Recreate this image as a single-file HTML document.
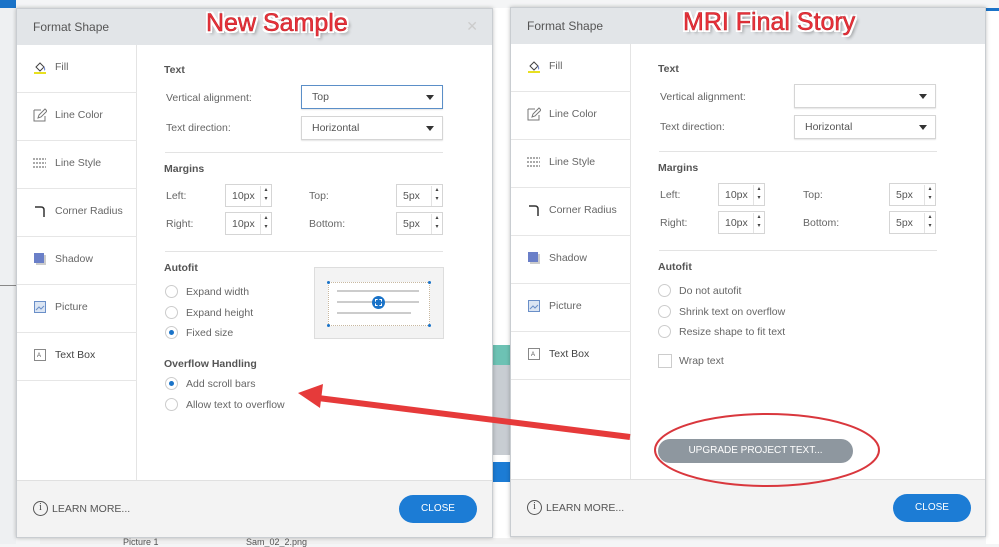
<!DOCTYPE html><html><head><meta charset="utf-8"><style>
*{box-sizing:border-box;margin:0;padding:0}
body{width:999px;height:544px;overflow:hidden;background:#f4f5f6;font-family:"Liberation Sans",sans-serif;font-size:10.5px;color:#555;position:relative}
.a{position:absolute}
.dlg{position:absolute;background:#fff;border:1px solid #c9cdd1;box-shadow:0 0 4px rgba(0,0,0,.25)}
.hdr{position:absolute;left:0;top:0;right:0;background:#e2e5e8;font-size:12px;color:#555}
.side{position:absolute;left:0;width:120px;border-right:1px solid #e4e4e4}
.it{position:absolute;left:0;width:120px;height:48px;border-bottom:1px solid #e6e6e6;font-size:10.5px;color:#666}
.it span{position:absolute;left:38px;top:16px}
.it svg{position:absolute;left:16px;top:15px}
.h{position:absolute;font-weight:bold;color:#555;font-size:10.5px}
.l{position:absolute;color:#666;font-size:10.5px}
.dd{position:absolute;border:1px solid #d5d5d5;background:#fff;font-size:10.5px;color:#555;padding:5px 10px;box-shadow:0 1px 1px rgba(0,0,0,.1)}
.dd:after{content:"";position:absolute;right:8px;top:9px;border:4px solid transparent;border-top:5px solid #333}
.sp{position:absolute;border:1px solid #d5d5d5;background:#fff;width:47px;height:23px;font-size:10.5px;color:#555;padding:5px 6px}
.sp:after{content:"▴\A▾";white-space:pre;font-size:6px;line-height:9px;color:#444;text-align:center;position:absolute;right:0;top:1px;width:10px;height:20px;border-left:1px solid #e3e3e3}
.hr{position:absolute;height:1px;background:#e3e3e3}
.r{position:absolute;width:13px;height:13px;border:1px solid #ccc;border-radius:50%;background:#fff}
.r.on:after{content:"";position:absolute;left:3px;top:3px;width:5px;height:5px;border-radius:50%;background:#1a73c8}
.ft{position:absolute;left:0;right:0;bottom:0;background:#f3f3f3;border-top:1px solid #e0e0e0}
.btn{position:absolute;background:#1c7cd5;color:#fff;border-radius:14px;font-size:10px;text-align:center;line-height:27px}
.info{position:absolute;width:15px;height:15px;border:1.5px solid #555;border-radius:50%;font-size:10px;text-align:center;line-height:12px;font-family:"Liberation Serif",serif;color:#444}
.ttl{position:absolute;font-size:25px;color:#e8323a;-webkit-text-stroke:0.5px #c02028;text-shadow:-2px -2px 0 #fff,2px -2px 0 #fff,-2px 2px 0 #fff,2px 2px 0 #fff,0 2px 0 #fff,2px 0 0 #fff,3px 3px 3px rgba(0,0,0,.4)}
</style></head><body>
<!-- background -->
<div class="a" style="left:0;top:0;width:16px;height:8px;background:#1a73c8"></div>
<div class="a" style="left:0;top:8px;width:16px;height:536px;background:#eef0f2"></div>
<div class="a" style="left:0;top:285px;width:16px;height:1px;background:#888"></div>
<div class="a" style="left:493px;top:8px;width:17px;height:536px;background:#fff"></div>
<div class="a" style="left:493px;top:345px;width:17px;height:20px;background:#6dc2b4"></div>
<div class="a" style="left:493px;top:365px;width:17px;height:90px;background:#c8cdd2"></div>
<div class="a" style="left:493px;top:462px;width:17px;height:20px;background:#1c7cd5"></div>
<div class="a" style="left:986px;top:8px;width:13px;height:536px;background:#fff"></div>
<div class="a" style="left:986px;top:8px;width:13px;height:3px;background:#1a73c8"></div>
<div class="a" style="left:40px;top:538px;width:540px;height:6px;background:#f0f0f0;font-size:9px;color:#555"><span style="position:absolute;left:83px;top:-1px">Picture 1</span><span style="position:absolute;left:206px;top:-1px">Sam_02_2.png</span></div>

<!-- LEFT DIALOG -->
<div class="dlg" style="left:16px;top:8px;width:477px;height:530px">
 <div class="hdr" style="height:36px"><span style="position:absolute;left:16px;top:11px">Format Shape</span><span style="position:absolute;right:14px;top:9px;color:#ccc;font-size:14px">✕</span></div>
 <div class="side" style="top:36px;height:437px">
  <div class="it" style="top:0"><svg width="14" height="14"><path d="M3 7l4-4 4 4-4 4z" fill="#fff" stroke="#444"/><path d="M11 7c1 2 1 3 0 3" stroke="#6a7fc8" fill="none"/><rect x="1" y="12" width="12" height="2" fill="#e8e020"/></svg><span>Fill</span></div>
  <div class="it" style="top:48px"><svg width="14" height="14"><path d="M1 2h7M1 2v11h11V8" stroke="#777" fill="none"/><path d="M5 10l1-3 6-6 2 2-6 6z" stroke="#777" fill="#fff"/></svg><span>Line Color</span></div>
  <div class="it" style="top:96px"><svg width="14" height="14"><path d="M0 3h13M0 7h13M0 11h13" stroke="#555" stroke-dasharray="2 1"/></svg><span>Line Style</span></div>
  <div class="it" style="top:144px"><svg width="14" height="14"><path d="M2 3h6q3 0 3 3v7" stroke="#333" stroke-width="1.5" fill="none"/></svg><span>Corner Radius</span></div>
  <div class="it" style="top:192px"><svg width="14" height="14"><rect x="3" y="3" width="10" height="10" fill="#ccc"/><rect x="1" y="1" width="10" height="10" fill="#6a7fc8"/></svg><span>Shadow</span></div>
  <div class="it" style="top:240px"><svg width="14" height="14"><rect x="1.5" y="1.5" width="11" height="11" fill="#dbe5f3" stroke="#6a8fc8"/><path d="M3 10l3-3 2 2 3-3" stroke="#6a8fc8" fill="none"/></svg><span>Picture</span></div>
  <div class="it" style="top:288px"><svg width="14" height="14"><rect x="1.5" y="1.5" width="11" height="11" fill="#fff" stroke="#888"/><text x="4" y="9" font-size="6" fill="#555">A</text></svg><span style="color:#444">Text Box</span></div>
 </div>
 <div class="h" style="left:147px;top:55px">Text</div>
 <div class="l" style="left:149px;top:83px">Vertical alignment:</div>
 <div class="dd" style="left:284px;top:76px;width:142px;height:24px;border-color:#5b8fc8">Top</div>
 <div class="l" style="left:149px;top:113px">Text direction:</div>
 <div class="dd" style="left:284px;top:107px;width:142px;height:24px">Horizontal</div>
 <div class="hr" style="left:148px;top:143px;width:278px"></div>
 <div class="h" style="left:147px;top:154px">Margins</div>
 <div class="l" style="left:149px;top:181px">Left:</div><div class="sp" style="left:208px;top:175px">10px</div>
 <div class="l" style="left:149px;top:209px">Right:</div><div class="sp" style="left:208px;top:203px">10px</div>
 <div class="l" style="left:292px;top:181px">Top:</div><div class="sp" style="left:379px;top:175px">5px</div>
 <div class="l" style="left:292px;top:209px">Bottom:</div><div class="sp" style="left:379px;top:203px">5px</div>
 <div class="hr" style="left:148px;top:242px;width:278px"></div>
 <div class="h" style="left:147px;top:253px">Autofit</div>
 <div class="r" style="left:148px;top:276px"></div><div class="l" style="left:169px;top:277px">Expand width</div>
 <div class="r" style="left:148px;top:297px"></div><div class="l" style="left:169px;top:298px">Expand height</div>
 <div class="r on" style="left:148px;top:317px"></div><div class="l" style="left:169px;top:318px">Fixed size</div>
 <div class="a" style="left:297px;top:258px;width:130px;height:72px;background:#f3f3f3;border:1px solid #ddd">
  <div class="a" style="left:13px;top:14px;width:102px;height:44px;background:#fff;border:1px dotted #c8b8a0"></div>
  <div class="a" style="left:22px;top:22px;width:82px;height:2px;background:#ccc"></div>
  <div class="a" style="left:22px;top:33px;width:82px;height:2px;background:#ccc"></div>
  <div class="a" style="left:22px;top:44px;width:74px;height:2px;background:#ccc"></div>
  <div class="a" style="left:57px;top:28px;width:13px;height:13px;border-radius:50%;background:#1a73c8"></div>
  <div class="a" style="left:60px;top:31px;width:7px;height:7px;border:1px dashed #fff"></div>
  <div class="a" style="left:12px;top:13px;width:3px;height:3px;background:#1a73c8;border-radius:50%"></div>
  <div class="a" style="left:113px;top:13px;width:3px;height:3px;background:#1a73c8;border-radius:50%"></div>
  <div class="a" style="left:12px;top:56px;width:3px;height:3px;background:#1a73c8;border-radius:50%"></div>
  <div class="a" style="left:113px;top:56px;width:3px;height:3px;background:#1a73c8;border-radius:50%"></div>
 </div>
 <div class="h" style="left:147px;top:349px">Overflow Handling</div>
 <div class="r on" style="left:148px;top:368px"></div><div class="l" style="left:169px;top:369px">Add scroll bars</div>
 <div class="r" style="left:148px;top:389px"></div><div class="l" style="left:169px;top:390px">Allow text to overflow</div>
 <div class="ft" style="height:57px">
  <div class="info" style="left:16px;top:20px">i</div><div class="l" style="left:35px;top:22px;color:#555">LEARN MORE...</div>
  <div class="btn" style="left:382px;top:14px;width:78px;height:28px">CLOSE</div>
 </div>
</div>

<!-- RIGHT DIALOG -->
<div class="dlg" style="left:510px;top:7px;width:476px;height:530px">
 <div class="hdr" style="height:36px"><span style="position:absolute;left:16px;top:11px">Format Shape</span></div>
 <div class="side" style="top:36px;height:437px">
  <div class="it" style="top:0"><svg width="14" height="14"><path d="M3 7l4-4 4 4-4 4z" fill="#fff" stroke="#444"/><path d="M11 7c1 2 1 3 0 3" stroke="#6a7fc8" fill="none"/><rect x="1" y="12" width="12" height="2" fill="#e8e020"/></svg><span>Fill</span></div>
  <div class="it" style="top:48px"><svg width="14" height="14"><path d="M1 2h7M1 2v11h11V8" stroke="#777" fill="none"/><path d="M5 10l1-3 6-6 2 2-6 6z" stroke="#777" fill="#fff"/></svg><span>Line Color</span></div>
  <div class="it" style="top:96px"><svg width="14" height="14"><path d="M0 3h13M0 7h13M0 11h13" stroke="#555" stroke-dasharray="2 1"/></svg><span>Line Style</span></div>
  <div class="it" style="top:144px"><svg width="14" height="14"><path d="M2 3h6q3 0 3 3v7" stroke="#333" stroke-width="1.5" fill="none"/></svg><span>Corner Radius</span></div>
  <div class="it" style="top:192px"><svg width="14" height="14"><rect x="3" y="3" width="10" height="10" fill="#ccc"/><rect x="1" y="1" width="10" height="10" fill="#6a7fc8"/></svg><span>Shadow</span></div>
  <div class="it" style="top:240px"><svg width="14" height="14"><rect x="1.5" y="1.5" width="11" height="11" fill="#dbe5f3" stroke="#6a8fc8"/><path d="M3 10l3-3 2 2 3-3" stroke="#6a8fc8" fill="none"/></svg><span>Picture</span></div>
  <div class="it" style="top:288px"><svg width="14" height="14"><rect x="1.5" y="1.5" width="11" height="11" fill="#fff" stroke="#888"/><text x="4" y="9" font-size="6" fill="#555">A</text></svg><span style="color:#444">Text Box</span></div>
 </div>
 <div class="h" style="left:147px;top:55px">Text</div>
 <div class="l" style="left:149px;top:83px">Vertical alignment:</div>
 <div class="dd" style="left:283px;top:76px;width:142px;height:24px"></div>
 <div class="l" style="left:149px;top:113px">Text direction:</div>
 <div class="dd" style="left:283px;top:107px;width:142px;height:24px">Horizontal</div>
 <div class="hr" style="left:148px;top:143px;width:278px"></div>
 <div class="h" style="left:147px;top:154px">Margins</div>
 <div class="l" style="left:149px;top:181px">Left:</div><div class="sp" style="left:207px;top:175px">10px</div>
 <div class="l" style="left:149px;top:209px">Right:</div><div class="sp" style="left:207px;top:203px">10px</div>
 <div class="l" style="left:292px;top:181px">Top:</div><div class="sp" style="left:378px;top:175px">5px</div>
 <div class="l" style="left:292px;top:209px">Bottom:</div><div class="sp" style="left:378px;top:203px">5px</div>
 <div class="hr" style="left:148px;top:242px;width:278px"></div>
 <div class="h" style="left:147px;top:253px">Autofit</div>
 <div class="r" style="left:147px;top:276px"></div><div class="l" style="left:168px;top:277px">Do not autofit</div>
 <div class="r" style="left:147px;top:297px"></div><div class="l" style="left:168px;top:298px">Shrink text on overflow</div>
 <div class="r" style="left:147px;top:317px"></div><div class="l" style="left:168px;top:318px">Resize shape to fit text</div>
 <div class="a" style="left:147px;top:346px;width:14px;height:14px;border:1px solid #ccc"></div><div class="l" style="left:168px;top:347px">Wrap text</div>
 <div class="a" style="left:147px;top:431px;width:195px;height:24px;background:#8e979f;border-radius:12px;color:#fff;font-size:10px;text-align:center;line-height:24px">UPGRADE PROJECT TEXT...</div>
 <div class="ft" style="height:57px">
  <div class="info" style="left:16px;top:20px">i</div><div class="l" style="left:35px;top:22px;color:#555">LEARN MORE...</div>
  <div class="btn" style="left:382px;top:14px;width:78px;height:28px">CLOSE</div>
 </div>
</div>

<!-- annotations -->
<div class="ttl" style="left:206px;top:9px">New Sample</div>
<div class="ttl" style="left:683px;top:8px">MRI Final Story</div>
<svg class="a" style="left:0;top:0" width="999" height="544">
 <ellipse cx="767" cy="450" rx="112" ry="36" fill="none" stroke="#d9373d" stroke-width="2"/>
 <line x1="630" y1="437" x2="318" y2="398" stroke="#e63a3a" stroke-width="6"/>
 <polygon points="298,393 323,384 320,408" fill="#e63a3a"/>
</svg>
</body></html>
